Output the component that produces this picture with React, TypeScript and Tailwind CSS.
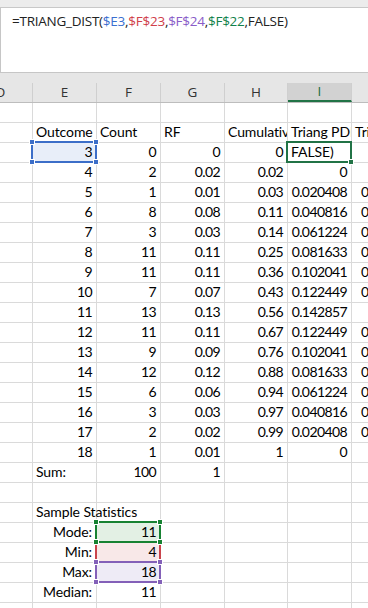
import React from "react";

const cellFont = { fontFamily: "Lato, 'Liberation Sans', sans-serif" } as React.CSSProperties;

type Cell = { t?: string; a?: "l" | "r"; clip?: boolean; j?: boolean };

const widths = [64, 64, 64, 64, 63, 64, 64];

const rowsData: string[][] = [
  ["3", "0", "0", "0", "FALSE)", ""],
  ["4", "2", "0.02", "0.02", "0", ""],
  ["5", "1", "0.01", "0.03", "0.020408", "0"],
  ["6", "8", "0.08", "0.11", "0.040816", "0"],
  ["7", "3", "0.03", "0.14", "0.061224", "0"],
  ["8", "11", "0.11", "0.25", "0.081633", "0"],
  ["9", "11", "0.11", "0.36", "0.102041", "0"],
  ["10", "7", "0.07", "0.43", "0.122449", "0"],
  ["11", "13", "0.13", "0.56", "0.142857", ""],
  ["12", "11", "0.11", "0.67", "0.122449", "0"],
  ["13", "9", "0.09", "0.76", "0.102041", "0"],
  ["14", "12", "0.12", "0.88", "0.081633", "0"],
  ["15", "6", "0.06", "0.94", "0.061224", "0"],
  ["16", "3", "0.03", "0.97", "0.040816", "0"],
  ["17", "2", "0.02", "0.99", "0.020408", "0"],
  ["18", "1", "0.01", "1", "0", ""],
];

function Handle({ pos, color }: { pos: string; color: string }) {
  return (
    <div
      className={`absolute w-[6px] h-[6px] border border-white z-20 ${pos}`}
      style={{ backgroundColor: color }}
    />
  );
}

function GridRow({
  cells,
  extra,
  height = 20,
}: {
  cells: Cell[];
  extra?: (i: number) => React.ReactNode;
  height?: number;
}) {
  return (
    <div className="flex border-b border-[#dadada]" style={{ height }}>
      {widths.map((w, i) => {
        const c = cells[i] || {};
        const numeric = !!c.t && /^[0-9.]+$/.test(c.t);
        return (
          <div
            key={i}
            className={`relative shrink-0 border-r border-[#dadada] flex items-end pb-[1px] text-[14px] leading-[18px] text-black whitespace-nowrap ${
              numeric ? "tracking-[-0.6px]" : "tracking-[-0.1px]"
            } ${
              c.j
                ? "justify-start pl-[9px]"
                : c.a === "r"
                ? "justify-end pr-[4px]"
                : "justify-start pl-[3px]"
            } ${c.clip ? "overflow-hidden" : ""}`}
            style={{ width: w }}
          >
            {extra ? extra(i) : null}
            {c.t ? <span className="relative z-10">{c.t}</span> : null}
          </div>
        );
      })}
    </div>
  );
}

export default function App() {
  const blank: Cell[] = [];
  return (
    <div className="w-[368px] h-[608px] overflow-hidden bg-[#e6e6e6] relative">
      {/* formula bar */}
      <div className="h-[8px] bg-[#ececec] border-b border-[#c8c8c8]" />
      <div className="h-[65px] bg-white border-l border-b border-[#c6c6c6] w-[380px] pl-[11px] pt-[3px]">
        <div
          className="text-[13.5px] tracking-[-0.25px] leading-[20px] text-[#222] whitespace-nowrap"
          style={{ fontFamily: "'Open Sans', 'Noto Sans', sans-serif" }}
        >
          =TRIANG_DIST(<span className="text-[#3b6fd0]">$E3</span>,
          <span className="text-[#d0404a]">$F$23</span>,
          <span className="text-[#8a5cc8]">$F$24</span>,
          <span className="text-[#11814a]">$F$22</span>,FALSE)
        </div>
      </div>
      <div className="h-[10px]" />
      {/* sheet */}
      <div className="ml-[-31px] bg-white" style={cellFont}>
        {/* column headers */}
        <div className="flex h-[20px] bg-[#e6e6e6] border-b border-[#bdbdbd]">
          {["D", "E", "F", "G", "H", "I", "J"].map((l, i) => (
            <div
              key={l}
              className={`shrink-0 flex items-center justify-center border-r border-[#cfcfcf] ${
                l === "I"
                  ? "bg-[#d2d2d2] text-[#1e6b40] border-b-2 border-b-[#217346]"
                  : "text-[#333]"
              }`}
              style={{ width: widths[i], fontFamily: "'Open Sans', 'Noto Sans', sans-serif", fontSize: 13.5 }}
            >
              {l}
            </div>
          ))}
        </div>
        <div className="bg-white">
          <GridRow cells={blank} />
          <GridRow
            cells={[
              {},
              { t: "Outcome", clip: true },
              { t: "Count", clip: true },
              { t: "RF", clip: true },
              { t: "Cumulative", clip: true },
              { t: "Triang PDF", clip: true },
              { t: "Triang CDF", clip: true },
            ]}
          />
          {rowsData.map((r, ri) => (
            <GridRow
              key={ri}
              cells={[
                {},
                { t: r[0], a: "r" },
                { t: r[1], a: "r" },
                { t: r[2], a: "r" },
                { t: r[3], a: "r" },
                ri === 0 ? { t: r[4], a: "l" } : { t: r[4], a: "r" },
                r[5] ? { t: "0.020408", j: true } : {},
              ]}
              extra={
                ri === 0
                  ? (i) =>
                      i === 1 ? (
                        <div className="absolute left-[-2px] top-[-2px] right-[-1px] bottom-[-1px] border-2 border-[#3c6ec8] bg-[#e8eef9]">
                          <Handle pos="-left-[4px] -top-[4px]" color="#3c6ec8" />
                          <Handle pos="-right-[4px] -top-[4px]" color="#3c6ec8" />
                          <Handle pos="-left-[4px] -bottom-[4px]" color="#3c6ec8" />
                          <Handle pos="-right-[4px] -bottom-[4px]" color="#3c6ec8" />
                        </div>
                      ) : i === 5 ? (
                        <div className="absolute left-[-2px] top-[-2px] right-[-1px] bottom-[-1px] border-2 border-[#217346] z-20">
                          <div className="absolute -right-[4px] -bottom-[4px] w-[6px] h-[6px] bg-[#217346] border border-white" />
                        </div>
                      ) : null
                  : undefined
              }
            />
          ))}
          <GridRow cells={[{}, { t: "Sum:" }, { t: "100", a: "r" }, { t: "1", a: "r" }]} />
          <GridRow cells={blank} />
          <GridRow cells={[{}, { t: "Sample Statistics" }]} />
          <GridRow
            cells={[{}, { t: "Mode:", a: "r" }, { t: "11", a: "r" }]}
            extra={(i) =>
              i === 2 ? (
                <div className="absolute left-[-2px] top-[-2px] right-[-1px] bottom-[-1px] border-2 border-[#178232] bg-[#e3f0e4] z-[5]">
                  <Handle pos="-left-[4px] -top-[4px]" color="#178232" />
                  <Handle pos="-right-[4px] -top-[4px]" color="#178232" />
                  <Handle pos="-left-[4px] -bottom-[4px]" color="#178232" />
                  <Handle pos="-right-[4px] -bottom-[4px]" color="#178232" />
                </div>
              ) : null
            }
          />
          <GridRow
            cells={[{}, { t: "Min:", a: "r" }, { t: "4", a: "r" }]}
            extra={(i) =>
              i === 2 ? (
                <div className="absolute left-[-2px] top-[-2px] right-[-1px] bottom-[-1px] border-x-2 border-[#c9444c] bg-[#f8e8e8]" />
              ) : null
            }
          />
          <GridRow
            cells={[{}, { t: "Max:", a: "r" }, { t: "18", a: "r" }]}
            extra={(i) =>
              i === 2 ? (
                <div className="absolute left-[-2px] top-[-2px] right-[-1px] bottom-[-1px] border-2 border-[#8360b8] bg-[#eeebf6] z-[5]">
                  <Handle pos="-left-[4px] -top-[4px]" color="#8360b8" />
                  <Handle pos="-right-[4px] -top-[4px]" color="#8360b8" />
                  <Handle pos="-left-[4px] -bottom-[4px]" color="#8360b8" />
                  <Handle pos="-right-[4px] -bottom-[4px]" color="#8360b8" />
                </div>
              ) : null
            }
          />
          <GridRow cells={[{}, { t: "Median:", a: "r" }, { t: "11", a: "r" }]} />
          <GridRow cells={blank} />
        </div>
      </div>
    </div>
  );
}
